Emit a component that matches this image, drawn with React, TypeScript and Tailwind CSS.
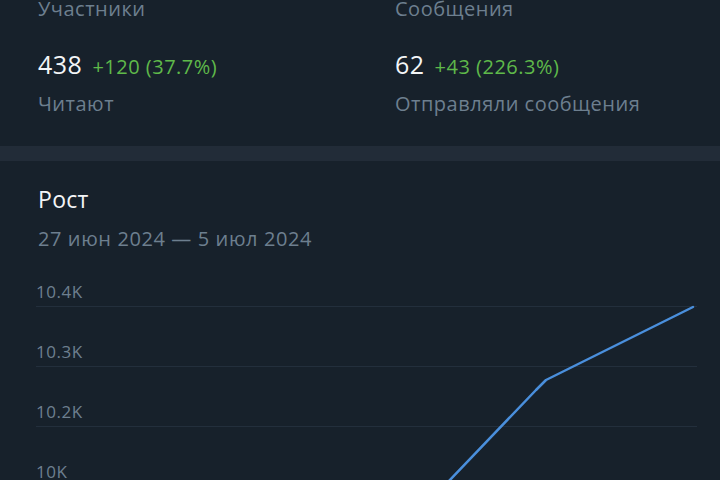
const rows = ['10.4K', '10.3K', '10.2K', '10K'];

// page-space points of the growth line, shifted by the chart's top (280)
const line = [
  [398, 532],
  [448, 480],
  [536, 388],
  [546, 378],
  [693, 305],
]
  .map(([x, y]) => `${x},${y - 280}`)
  .join(' ');

function Stat({ label, value, delta, caption }: { label: string; value: string; delta: string; caption: string }) {
  return (
    <div>
      <div className="text-[20px] leading-[26px] tracking-[0.5px] text-[#6d7f8f]">{label}</div>
      <div className="mt-[26px] flex items-baseline gap-[10px]">
        <span className="text-[25px] leading-[32px] tracking-[0.5px] text-[#f3f5f7]">{value}</span>
        <span className="text-[20px] leading-[32px] tracking-[0.5px] text-[#5fb94a]">{delta}</span>
      </div>
      <div className="mt-[8px] text-[20px] leading-[26px] tracking-[0.5px] text-[#6d7f8f]">{caption}</div>
    </div>
  );
}

export default function App() {
  return (
    <div className="h-[480px] w-[720px] overflow-hidden bg-[#17212b] font-['Open_Sans',sans-serif]">
      {/* Totals */}
      <div className="-mt-[4px] grid grid-cols-[357px_1fr] pb-[29px] pl-[38px]">
        <Stat label="Участники" value="438" delta="+120 (37.7%)" caption="Читают" />
        <Stat label="Сообщения" value="62" delta="+43 (226.3%)" caption="Отправляли сообщения" />
      </div>

      <div className="h-[15px] bg-[#222c38]" />

      {/* Growth chart */}
      <div className="pl-[38px] pt-[23px]">
        <div className="text-[23px] leading-[30px] tracking-[0.3px] text-[#f3f5f7]">Рост</div>
        <div className="mt-[12px] text-[20px] leading-[26px] tracking-[0.6px] text-[#6d7f8f]">
          27 июн 2024 — 5 июл 2024
        </div>
      </div>

      <div className="relative mt-[30px] pl-[36px] pr-[23px]">
        <div className="flex flex-col gap-[35px]">
          {rows.map((r) => (
            <div key={r}>
              <div className="text-[17px] leading-[20px] tracking-[0.5px] text-[#6d7f8f]">{r}</div>
              <div className="mt-[4px] h-px bg-[#232f3c]" />
            </div>
          ))}
        </div>
        <svg className="absolute left-0 top-0" width="720" height="260" viewBox="0 0 720 260">
          <polyline
            points={line}
            fill="none"
            stroke="#4a8fdc"
            strokeWidth="2.5"
            strokeLinejoin="round"
            strokeLinecap="round"
          />
        </svg>
      </div>
    </div>
  );
}
